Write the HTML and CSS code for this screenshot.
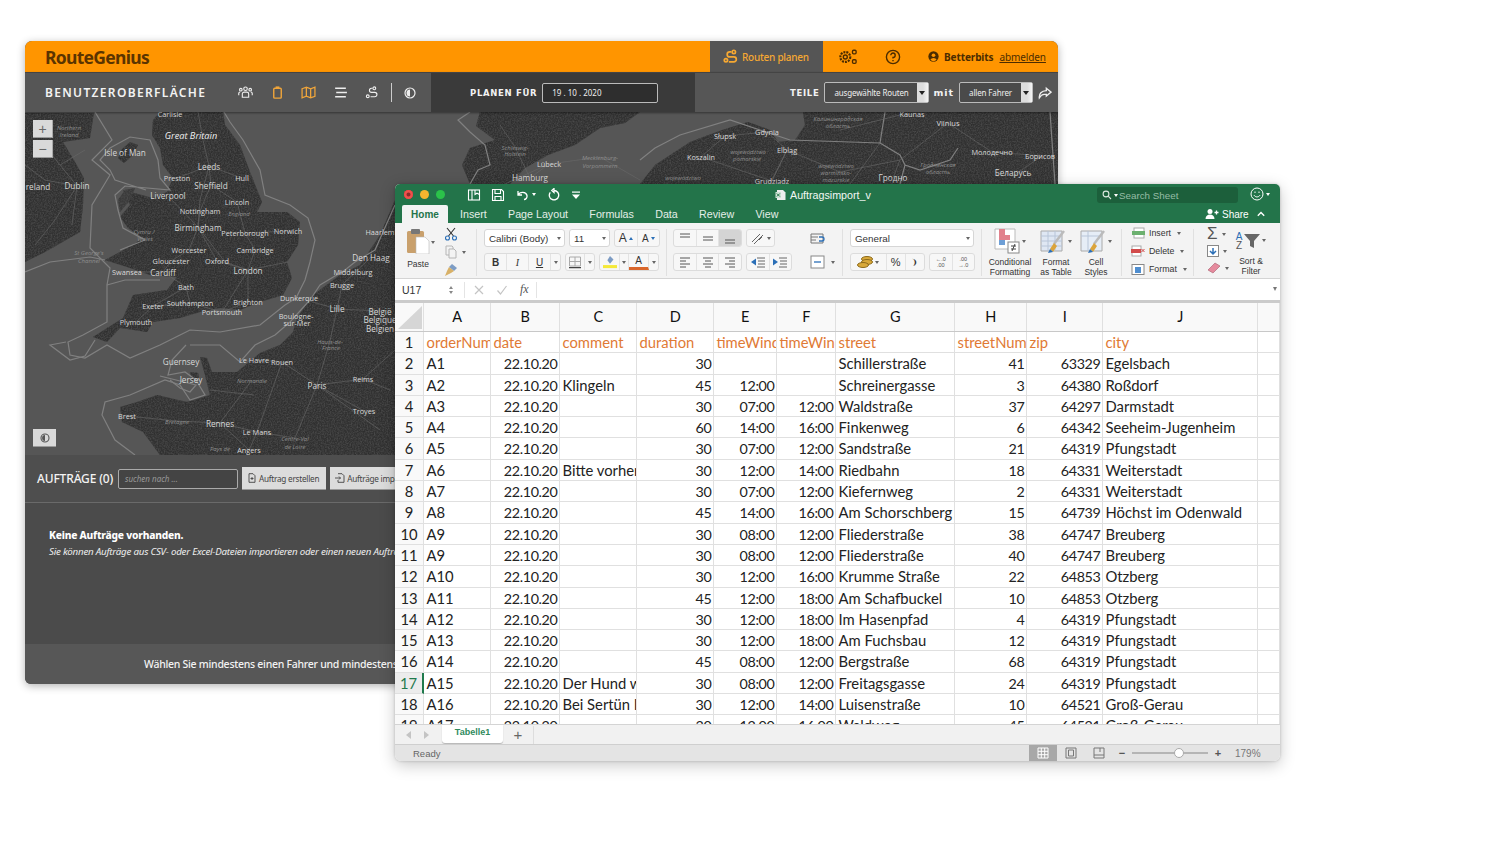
FILE: index.html
```html
<!DOCTYPE html>
<html lang="de">
<head>
<meta charset="utf-8">
<title>RouteGenius</title>
<link rel="stylesheet" href="styles.css">
</head>
<body>
<div class="desktop">

<section class="rg">
  <header class="rg-head">
    <div class="rg-logo">RouteGenius</div>
    <nav class="rg-nav">
      <div class="rg-active">
        <svg class="i15" viewBox="0 0 18 18" fill="none" stroke="currentColor" stroke-width="2"><circle cx="3.5" cy="13.5" r="2"/><circle cx="13" cy="3.5" r="2"/><path d="M10 3.5H8a3 3 0 0 0 0 6h5a2.500 2.500 0 0 1 0 6H7"/></svg>
        <span>Routen planen</span>
      </div>
      <div class="rg-gear">
        <svg class="i20" viewBox="0 0 22 20" fill="none" stroke="#4b2c00" stroke-width="1.5"><circle cx="8" cy="10" r="5.5" stroke-dasharray="2.2 1.1" stroke-width="2.4"/><circle cx="8" cy="10" r="2.2"/><rect x="16" y="2.5" width="4" height="4" rx="1.2"/><rect x="16" y="13" width="4" height="4" rx="1.2"/></svg>
      </div>
      <div class="rg-help">
        <svg class="i16" viewBox="0 0 16 16" fill="none" stroke="#4b2c00" stroke-width="1.4"><circle cx="8" cy="8" r="6.6"/><path d="M5.8 6.2A2.2 2.2 0 1 1 8 8.4V9.6"/><path d="M8 11v1.3"/></svg>
      </div>
      <div class="rg-user">
        <svg class="i11" viewBox="0 0 12 12"><circle cx="6" cy="6" r="5.6" fill="#4b2c00"/><circle cx="6" cy="4.6" r="2" fill="#ff9500"/><path d="M2.6 9.6a3.6 3 0 0 1 6.8 0 5 5 0 0 1-6.8 0z" fill="#ff9500"/></svg>
        <b>Betterbits</b><u>abmelden</u>
      </div>
    </nav>
  </header>

  <div class="rg-bar">
    <div class="rg-bar-left">
      <div class="rg-bar-title">BENUTZEROBERFLÄCHE</div>
      <div class="rg-tools">
        <svg class="i15" viewBox="0 0 16 14" fill="none" stroke="#eee" stroke-width="1.2"><circle cx="8" cy="3" r="1.9"/><circle cx="3" cy="4" r="1.4"/><circle cx="13" cy="4" r="1.4"/><path d="M4.6 12V8.6a2 2 0 0 1 2-2h2.8a2 2 0 0 1 2 2V12zM.8 10V8a1.6 1.6 0 0 1 1.6-1.6M15.2 10V8a1.6 1.6 0 0 0-1.6-1.6"/></svg>
        <svg class="i15" viewBox="0 0 16 16" fill="none" stroke="#f0a53a" stroke-width="1.5"><rect x="4" y="3.5" width="8" height="10.5" rx="1"/><rect x="6" y="1.5" width="4" height="2.6" fill="#f0a53a" stroke="none"/></svg>
        <svg class="i15" viewBox="0 0 14 14" fill="none" stroke="#f0a53a" stroke-width="1.2"><path d="M1 3.5 5 2l4 1.500L13 2v8.500L9 12l-4-1.500L1 12zM5 2v8.500M9 3.500V12"/></svg>
        <svg class="i15" viewBox="0 0 14 14" fill="none" stroke="#eee" stroke-width="1.4"><path d="M2 3h10M3 7h10M2 11h10"/></svg>
        <svg class="i15" viewBox="0 0 16 16" fill="none" stroke="#eee" stroke-width="1.2"><circle cx="4" cy="12" r="1.5"/><circle cx="11" cy="3.5" r="1.5"/><path d="M9 3.500H8a2.200 2.200 0 0 0 0 4.400h3.500a1.900 1.900 0 0 1 0 4.600H7"/></svg>
        <span class="rg-divider"></span>
        <svg class="i12" viewBox="0 0 12 12"><circle cx="6" cy="6" r="5" fill="none" stroke="#eee" stroke-width="1.2"/><path d="M6 2.500a3.500 3.500 0 0 0 0 7z" fill="#eee"/></svg>
      </div>
    </div>
    <div class="rg-plan">
      <span class="rg-label">PLANEN FÜR</span>
      <div class="rg-date">19 . 10 . 2020</div>
    </div>
    <div class="rg-share">
      <span class="rg-label">TEILE</span>
      <div class="rg-select rg-select-a"><span>ausgewählte Routen</span><i></i></div>
      <span class="rg-label rg-mit">mit</span>
      <div class="rg-select rg-select-b"><span>allen Fahrer</span><i></i></div>
      <svg class="i14 rg-share-icon" viewBox="0 0 16 14" fill="none" stroke="#eee" stroke-width="1.5"><path d="M9.500 1.500 15 6l-5.500 4.500V8.500H7C4.500 8.500 3 10 1.500 12.500 1 8 4 4.500 9.500 4.300z"/></svg>
    </div>
  </div>

  <div class="rg-map">
    <svg class="map-svg" viewBox="25 112 1033 343" preserveAspectRatio="none">
      <defs>
        <filter id="grain" x="0" y="0" width="100%" height="100%">
          <feTurbulence type="fractalNoise" baseFrequency="0.7" numOctaves="2" seed="4"/>
          <feColorMatrix type="matrix" values="0 0 0 0 0.1  0 0 0 0 0.1  0 0 0 0 0.1  1.2 0 0 0 -0.45"/>
          <feComposite in2="SourceAlpha" operator="in" result="n"/>
          <feMerge><feMergeNode in="SourceGraphic"/><feMergeNode in="n"/></feMerge>
        </filter>
      </defs>
      <g class="land" filter="url(#grain)">
        <path d="M25 113H94L90 138 63 142 75 162 84 178 83 205 80 232 45 252 25 262Z"/>
        <path d="M160 112H223L225 125 240 145 250 172 262 202 257 212 287 212 300 222 298 245 287 262 292 278 283 295 260 302 240 310 220 308 200 312 180 318 153 322 147 332 120 328 107 342 93 337 123 318 133 295 167 290 177 277 150 275 130 268 105 260 133 245 143 238 128 228 120 217 130 205 123 190 153 198 167 192 173 178 163 165 160 148 152 135 153 120Z"/>
        <path d="M125 190 135 188 130 200 120 212 118 200Z" class="land-soft"/>
        <path d="M1058 455V250L395 200 380 235 360 265 340 275 313 295 297 318 293 332 280 345 260 353 237 372 212 372 207 358 200 357 205 375 210 395 187 402 157 395 137 402 120 407 122 422 143 432 160 455Z"/>
        <path d="M122 149 130 142 138 145 133 155 124 163 118 158Z"/>
        <path d="M190 372 198 373 199 378 192 380Z"/>
        <path d="M480 112H640L625 123 600 128 575 145 548 155 525 168 510 184H470L462 165 470 148 495 140 476 126Z"/>
        <path d="M803 112H1058V184H640L655 165 690 142 722 130 748 122 770 130 778 142 795 140 805 125Z"/>
      </g>
      <g class="coast">
        <path d="M95 112 112 140 92 160 110 175 92 205 90 248 110 268 107 285 107 322 83 335 68 342 70 355 85 358 107 345 130 358 160 345 190 330 220 332 260 325 285 305 296 298 305 280 310 262 315 240 308 218 290 205 265 195 260 170 243 140 230 122 224 112"/>
        <path d="M146 190 115 180 110 170 100 160 110 148 130 137 150 140 158 160 160 178 170 190 125 186 115 195 118 210 123 228 145 240 120 250"/>
        <path d="M25 272 50 262 90 257 105 260"/>
        <path d="M107 285 125 280 160 280"/>
        <path d="M66 342 50 345 70 360 85 356 95 340"/>
        <path d="M186 345 172 360 168 375 185 372 196 380 205 395 190 400 180 385 165 380 130 395 105 402 102 415 115 440 135 455"/>
        <path d="M190 345 220 345 240 362 255 345 275 335 290 322 310 300 320 285 345 270 355 262 375 250 395 205"/>
        <path d="M160 376 196 385 190 392 180 388 170 380"/>
        <path d="M470 184 478 170 490 165 485 145 470 132 458 120 470 112"/>
        <path d="M640 160 655 148 680 135 730 120 790 140 880 143 885 112"/>
        <path d="M880 143 900 155 905 165 920 170 950 160 958 148M905 165 900 184"/>
        <path d="M1055 184 1050 112"/>
      </g>
      <g class="roads">
        <path d="M198 112 203 140 209 166 200 200 198 227 225 262 248 270M209 166 242 178M177 178 209 166 211 185 237 202 245 233 288 231M168 196 198 227 189 250 171 261 163 272M198 227 217 261 248 270 255 250 245 233M248 270 248 302 222 312 190 303 186 287 163 272M248 270 222 312M153 306 186 287M136 322 153 306 190 303M127 272 163 272M211 185 200 211 198 227M248 270 288 262"/>
        <path d="M40 140 60 165 77 186 55 220 35 245M77 186 45 180 25 165M77 186 72 225M60 165 85 150"/>
        <path d="M317 385 282 362 254 360M317 385 363 379 395 350M317 385 364 411M317 385 295 438 257 432 220 423 177 421 127 416M317 385 330 341 337 309M337 309 299 298M337 309 342 285 371 257M337 309 380 311M220 423 249 450M257 432 249 450M282 362 257 432M317 385 380 430M363 379 390 390M252 380 220 423M210 390 254 395"/>
        <path d="M500 125 515 147 530 178M549 164 600 157 640 180M530 178 549 164 505 184"/>
        <path d="M725 136 767 132 787 150 840 172 900 160 948 123M701 157 725 136M701 157 772 181 787 150M787 150 770 184M948 123 992 152 1042 156M893 178 900 160M1013 176 1042 156M840 130 900 115 912 114M880 143 850 184"/>
      </g>
      <g class="labels lb-b">
        <text x="170" y="117">Carlisle</text><text x="177" y="181">Preston</text><text x="242" y="181">Hull</text><text x="237" y="205">Lincoln</text><text x="200" y="214">Nottingham</text><text x="245" y="236">Peterborough</text><text x="288" y="234">Norwich</text><text x="189" y="253">Worcester</text><text x="255" y="253">Cambridge</text><text x="171" y="264">Gloucester</text><text x="217" y="264">Oxford</text><text x="127" y="275">Swansea</text><text x="186" y="290">Bath</text><text x="153" y="309">Exeter</text><text x="190" y="306">Southampton</text><text x="248" y="305">Brighton</text><text x="222" y="315">Portsmouth</text><text x="136" y="325">Plymouth</text><text x="380" y="235">Haarlem</text><text x="353" y="275">Middelburg</text><text x="342" y="288">Brugge</text><text x="299" y="301">Dunkerque</text><text x="296" y="319">Boulogne-</text><text x="297" y="326">sur-Mer</text><text x="254" y="363">Le Havre</text><text x="282" y="365">Rouen</text><text x="364" y="414">Troyes</text><text x="363" y="382">Reims</text><text x="127" y="419">Brest</text><text x="257" y="435">Le Mans</text><text x="249" y="453">Angers</text><text x="549" y="167">Lübeck</text><text x="725" y="139">Słupsk</text><text x="767" y="135">Gdynia</text><text x="701" y="160">Koszalin</text><text x="787" y="153">Elbląg</text><text x="912" y="117">Kaunas</text><text x="992" y="155">Молодечно</text><text x="1040" y="159">Борисов</text><text x="772" y="184">Grudziądz</text>
        <text class="lb-l" x="209" y="170">Leeds</text><text class="lb-l" x="211" y="189">Sheffield</text><text class="lb-l" x="168" y="199">Liverpool</text><text class="lb-l" x="198" y="231">Birmingham</text><text class="lb-l" x="163" y="276">Cardiff</text><text class="lb-l" x="248" y="274">London</text><text class="lb-l" x="77" y="189">Dublin</text><text class="lb-l" x="38" y="190">reland</text><text class="lb-l" x="371" y="261">Den Haag</text><text class="lb-l" x="337" y="312">Lille</text><text class="lb-l" x="380" y="315">België</text><text class="lb-l" x="380" y="323">Belgique</text><text class="lb-l" x="380" y="332">Belgien</text><text class="lb-l" x="181" y="365">Guernsey</text><text class="lb-l" x="191" y="383">Jersey</text><text class="lb-l" x="317" y="389">Paris</text><text class="lb-l" x="220" y="427">Rennes</text><text class="lb-l" x="125" y="156">Isle of Man</text><text class="lb-l" x="530" y="181">Hamburg</text><text class="lb-b2" x="948" y="126">Vilnius</text><text class="lb-l" x="1013" y="176">Беларусь</text><text class="lb-l" x="893" y="181">Гродно</text>
      </g>
      <g class="labels lb-i">
        <text class="lb-w" x="191" y="139">Great Britain</text>
        <text x="69" y="130">Northern</text><text x="69" y="137">Ireland</text><text x="239" y="216">England</text><text x="144" y="234">Cymru /</text><text x="145" y="241">Wales</text><text x="89" y="255">St George's</text><text x="89" y="263">Channel</text><text x="330" y="344">Hauts-de-</text><text x="331" y="350">France</text><text x="252" y="383">Normandie</text><text x="177" y="424">Bretagne</text><text x="295" y="441">Centre-Val</text><text x="295" y="449">de Loire</text><text x="220" y="451">Pays de</text><text x="515" y="150">Schleswig-</text><text x="515" y="156">Holstein</text><text x="600" y="160">Mecklenburg-</text><text x="600" y="168">Vorpommern</text><text x="748" y="154">województwo</text><text x="747" y="161">pomorskie</text><text x="836" y="168">województwo</text><text x="836" y="175">warmińsko-</text><text x="836" y="182">mazurskie</text><text x="838" y="121">Калининградская</text><text x="838" y="128">область</text><text x="938" y="167">Гродненская</text><text x="938" y="174">область</text><text x="683" y="180">województwo</text>
      </g>
    </svg>
    <div class="map-zoom">
      <button class="map-btn">+</button>
      <button class="map-btn">−</button>
    </div>
    <button class="map-contrast">
      <svg class="i10" viewBox="0 0 12 12"><circle cx="6" cy="6" r="4.8" fill="none" stroke="#555" stroke-width="1.3"/><path d="M6 2.500a3.500 3.500 0 0 0 0 7z" fill="#555"/></svg>
    </button>
  </div>

  <div class="rg-orders">
    <div class="rg-orders-bar">
      <div class="rg-orders-title">AUFTRÄGE (0)</div>
      <div class="rg-search">suchen nach ...</div>
      <button class="rg-btn"><svg class="i10" viewBox="0 0 10 10" fill="none" stroke="#444" stroke-width=".9"><path d="M2 .7h4l2 2v6.600H2zM5 4v3M3.500 5.500h3"/></svg>Auftrag erstellen</button>
      <button class="rg-btn"><svg class="i10" viewBox="0 0 10 10" fill="none" stroke="#444" stroke-width=".9"><path d="M3 .7h4l2 2v6.600H3V7M0 5h5.500M4 3.500 5.500 5 4 6.500"/></svg>Aufträge importieren</button>
    </div>
    <div class="rg-empty">
      <strong>Keine Aufträge vorhanden.</strong>
      <em>Sie können Aufträge aus CSV- oder Excel-Dateien importieren oder einen neuen Auftrag erstellen.</em>
    </div>
  </div>
  <footer class="rg-foot">Wählen Sie mindestens einen Fahrer und mindestens einen Auftrag aus.</footer>
</section>

<section class="xl">
  <div class="xl-title">
    <div class="xl-lights"><i class="red"></i><i class="yel"></i><i class="grn"></i></div>
    <div class="xl-quick">
      <svg class="i14" viewBox="0 0 14 14" fill="none" stroke="#fff" stroke-width="1.1"><rect x="1.5" y="2" width="11" height="10"/><path d="M5 2v10M8 2v4.500l2-1.300 2.500 1.300"/></svg>
      <svg class="i14" viewBox="0 0 14 14" fill="none" stroke="#fff" stroke-width="1.1"><path d="M1.500 1.500h9l2 2v9h-11zM4 1.500v4h5.500v-4M4 12.500V8.500h6v4"/></svg>
      <span class="xl-undo"><svg class="i14" viewBox="0 0 14 14" fill="none" stroke="#fff" stroke-width="1.3"><path d="M3 3v4h4M3 7c2-3.500 8-3.500 9 .5 .4 2-1 4-3 4"/></svg><b class="caret-w"></b></span>
      <svg class="i14" viewBox="0 0 14 14" fill="none" stroke="#fff" stroke-width="1.3"><path d="M7 2.500a4.700 4.700 0 1 1-3.700 1.800M7 .5v4L4.800 2.500z"/></svg>
      <svg class="i10" viewBox="0 0 10 10" fill="#fff"><rect x="1" y="1.5" width="8" height="1.2"/><path d="M1 4.500h8L5 9z"/></svg>
    </div>
    <div class="xl-doc">
      <svg class="i12" viewBox="0 0 12 12"><path d="M2 1h6l2.500 2.500V11H2z" fill="#eee"/><rect x="0.5" y="3" width="5.500" height="6" fill="#cfe3d6"/><path d="M1.800 4.500l3 3M4.800 4.500l-3 3" stroke="#217346"/></svg>
      <span>Auftragsimport_v</span>
    </div>
    <div class="xl-search">
      <svg class="i10" viewBox="0 0 10 10" fill="none" stroke="#dce8e0" stroke-width="1.1"><circle cx="4" cy="4" r="2.900"/><path d="M6.200 6.200 9 9"/></svg>
      <b class="caret-w"></b><span>Search Sheet</span>
    </div>
    <div class="xl-smile">
      <svg class="i14" viewBox="0 0 14 14" fill="none" stroke="#fff" stroke-width="1"><circle cx="7" cy="7" r="6"/><path d="M4 8.200c1.500 2.300 4.500 2.300 6 0"/><path d="M5 4.500v1.500M9 4.500v1.500"/></svg>
      <b class="caret-w"></b>
    </div>
  </div>
  <div class="xl-tabs">
    <span class="xl-tab xl-tab-home">Home</span>
    <span class="xl-tab xl-t-ins">Insert</span>
    <span class="xl-tab xl-t-pl">Page Layout</span>
    <span class="xl-tab xl-t-fo">Formulas</span>
    <span class="xl-tab xl-t-da">Data</span>
    <span class="xl-tab xl-t-re">Review</span>
    <span class="xl-tab xl-t-vi">View</span>
    <span class="xl-share">
      <svg class="i14" viewBox="0 0 14 12" fill="#fff"><circle cx="5" cy="3.500" r="2.500"/><path d="M0.500 11c0-3 2-4.500 4.500-4.500S9.500 8 9.500 11z"/><path d="M9.500 4.500h4M11.500 2.500v4" stroke="#fff" fill="none" stroke-width="1.3"/></svg>
      Share
      <svg class="i8 xl-up" viewBox="0 0 8 8" fill="none" stroke="#fff" stroke-width="1.4"><path d="M.8 5.800 4 2.500l3.200 3.300"/></svg>
    </span>
  </div>

  <div class="xl-ribbon">
    <div class="rb rb-paste">
      <div class="rb-pastebtn">
        <svg class="paste-svg" viewBox="0 0 24 26"><rect x="1" y="3" width="17" height="22" rx="1.500" fill="#c9a06c"/><rect x="5" y="1" width="9" height="5" rx="1" fill="#777"/><path d="M10 9h9l4 4v13H10z" fill="#fff" stroke="#bbb" stroke-width=".6"/></svg>
        <span>Paste</span>
      </div>
      <b class="caret rb-pc"></b>
      <div class="rb-clip">
        <svg class="i14" viewBox="0 0 14 14" fill="none" stroke="#333" stroke-width="1.1"><path d="M3 1l6.500 8M11 1 4.500 9"/><circle cx="3.500" cy="11" r="2" stroke="#2b6fb7"/><circle cx="10.500" cy="11" r="2" stroke="#2b6fb7"/></svg>
        <span class="rb-copy"><svg class="i14" viewBox="0 0 14 14" fill="#f3f3f3" stroke="#b5b5b5"><path d="M2 1h6l1 1v8H2z"/><path d="M5 4h5l2 2v7H5z"/></svg><b class="caret"></b></span>
        <svg class="i14" viewBox="0 0 14 14"><path d="M8 1l5 4-3 3-5-4z" fill="#7d9cc4"/><path d="M5 4 10 8 7 10 1 13l2-5z" fill="#d8b168"/></svg>
      </div>
    </div>

    <div class="rb rb-font">
      <div class="rb-row">
        <div class="rb-field rb-w81"><span>Calibri (Body)</span><b class="caret"></b></div>
        <div class="rb-field rb-w41"><span>11</span><b class="caret"></b></div>
        <div class="rb-box rb-w46"><span class="rb-cell rb-aa">A<sup class="up"></sup></span><span class="rb-cell rb-as">A<sup class="dn"></sup></span></div>
      </div>
      <div class="rb-row">
        <div class="rb-box rb-w77"><span class="rb-cell rb-b">B</span><span class="rb-cell rb-i">I</span><span class="rb-cell rb-u">U</span><span class="rb-cell rb-dd"><b class="caret"></b></span></div>
        <div class="rb-box rb-w30"><span class="rb-cell"><svg class="i14" viewBox="0 0 14 14" fill="none" stroke="#aaa"><path d="M1.500 2h11v9h-11zM7 2v9M1.500 6.500h11"/><path d="M1 12.700h12" stroke="#444" stroke-width="1.2"/></svg></span><span class="rb-dd8"><b class="caret"></b></span></div>
        <div class="rb-box rb-w60">
          <span class="rb-cell"><svg class="i14" viewBox="0 0 16 14"><path d="M8 0l4 4-4 5-3-4z" fill="#7d9cc4"/><rect y="10.500" width="16" height="3.500" fill="#f5e93a"/></svg></span><span class="rb-dd8"><b class="caret"></b></span>
          <span class="rb-cell rb-col">A</span><span class="rb-dd8"><b class="caret"></b></span>
        </div>
      </div>
    </div>

    <div class="rb rb-align">
      <div class="rb-row">
        <div class="rb-box rb-w69">
          <span class="rb-cell"><svg class="i12" viewBox="0 0 12 12" stroke="#555"><path d="M1 2h10M1 5h10"/></svg></span>
          <span class="rb-cell"><svg class="i12" viewBox="0 0 12 12" stroke="#555"><path d="M1 5h10M1 8h10"/></svg></span>
          <span class="rb-cell rb-on"><svg class="i12" viewBox="0 0 12 12" stroke="#555"><path d="M1 8h10M1 11h10"/></svg></span>
        </div>
        <div class="rb-box rb-w29"><span class="rb-cell"><svg class="i14" viewBox="0 0 14 14" fill="none" stroke="#666"><path d="M1 11 9 3M3 13l9-9M8 9l3-3"/></svg><b class="caret"></b></span></div>
      </div>
      <div class="rb-row">
        <div class="rb-box rb-w69">
          <span class="rb-cell"><svg class="i12" viewBox="0 0 12 12" stroke="#555"><path d="M1 2h10M1 5h6M1 8h10M1 11h6"/></svg></span>
          <span class="rb-cell"><svg class="i12" viewBox="0 0 12 12" stroke="#555"><path d="M1 2h10M3 5h6M1 8h10M3 11h6"/></svg></span>
          <span class="rb-cell"><svg class="i12" viewBox="0 0 12 12" stroke="#555"><path d="M1 2h10M5 5h6M1 8h10M5 11h6"/></svg></span>
        </div>
        <div class="rb-box rb-w46">
          <span class="rb-cell"><svg class="i14" viewBox="0 0 14 12"><path d="M0 6l5-3.500v7z" fill="#2b6fb7"/><path d="M6 2h8M7 5h7M7 8h7M6 11h8" stroke="#666"/></svg></span>
          <span class="rb-cell"><svg class="i14" viewBox="0 0 14 12"><path d="M5 6 0 2.500v7z" fill="#2b6fb7"/><path d="M6 2h8M7 5h7M7 8h7M6 11h8" stroke="#666"/></svg></span>
        </div>
      </div>
      <div class="rb-wrap">
        <svg class="i16" viewBox="0 0 16 14" fill="none" stroke="#777"><path d="M1 2h12v9H1zM1 5h7M1 8h5"/><path d="M9 9h3a2 2 0 0 0 0-4H9" stroke="#2b6fb7" stroke-width="1.3"/></svg>
        <span class="rb-merge"><svg class="i16" viewBox="0 0 16 14" fill="#fff" stroke="#888"><rect x="1" y="1" width="13" height="12"/><path d="M4 7h7" stroke="#2b6fb7" stroke-width="1.3"/></svg><b class="caret"></b></span>
      </div>
    </div>

    <div class="rb rb-num">
      <div class="rb-row"><div class="rb-field rb-w124"><span>General</span><b class="caret"></b></div></div>
      <div class="rb-row">
        <div class="rb-box rb-w75">
          <span class="rb-cell rb-coins"><svg class="i16" viewBox="0 0 16 14"><ellipse cx="10" cy="4" rx="5.500" ry="2.500" fill="#d9a93a" stroke="#8d6b1c"/><ellipse cx="10" cy="7" rx="5.500" ry="2.500" fill="#d9a93a" stroke="#8d6b1c"/><ellipse cx="6" cy="10" rx="5.500" ry="2.500" fill="#d9a93a" stroke="#8d6b1c"/></svg><b class="caret"></b></span>
          <span class="rb-cell rb-pct">%</span>
          <span class="rb-cell rb-comma">❩</span>
        </div>
        <div class="rb-box rb-w46">
          <span class="rb-cell rb-dec"><i>←.0</i><i>.00</i></span>
          <span class="rb-cell rb-dec"><i>.00</i><i>→.0</i></span>
        </div>
      </div>
    </div>

    <div class="rb rb-styles">
      <div class="rb-big rb-w1">
        <span class="rb-bigicon"><svg class="big" viewBox="0 0 26 26"><path d="M1 1h20v20H1z" fill="#fff" stroke="#bbb"/><path d="M5 1h6v6H5z" fill="#e1818c"/><path d="M5 7h11v5H5z" fill="#e1818c"/><path d="M5 12h6v5H5z" fill="#6e9fd6"/><rect x="14" y="14" width="11" height="11" fill="#fff" stroke="#888"/><path d="M17 18h5M17 21h5M21 16l-3 7" stroke="#444"/></svg><b class="caret"></b></span>
        <span>Conditional<br>Formatting</span>
      </div>
      <div class="rb-big rb-w2">
        <span class="rb-bigicon"><svg class="big" viewBox="0 0 26 26"><path d="M1 3h21v20H1z" fill="#dfe7f3" stroke="#aaa"/><path d="M1 8h21M1 13h21M1 18h21M8 3v20M15 3v20" stroke="#b8c5d8"/><path d="M24 3 14 16" stroke="#bbb" stroke-width="2.500"/><path d="M14 15l-4 6 3 3 4-6z" fill="#dba43c"/><path d="M10 21l-2 4 5-1z" fill="#2b6fb7"/></svg><b class="caret"></b></span>
        <span>Format<br>as Table</span>
      </div>
      <div class="rb-big rb-w3">
        <span class="rb-bigicon"><svg class="big" viewBox="0 0 26 26"><path d="M1 3h21v20H1z" fill="#e6edf6" stroke="#aaa"/><path d="M1 8h21M8 3v20" stroke="#b8c5d8"/><path d="M24 3 14 16" stroke="#bbb" stroke-width="2.500"/><path d="M14 15l-4 6 3 3 4-6z" fill="#dba43c"/><path d="M10 21l-2 4 5-1z" fill="#2b6fb7"/></svg><b class="caret"></b></span>
        <span>Cell<br>Styles</span>
      </div>
    </div>

    <div class="rb rb-cells">
      <div class="rb-line"><svg class="i14" viewBox="0 0 14 12"><rect x="3" y="1" width="10" height="10" fill="#fff" stroke="#aaa"/><rect x="1" y="4" width="13" height="4" fill="#6cb06f"/></svg><span>Insert</span><b class="caret"></b></div>
      <div class="rb-line"><svg class="i14" viewBox="0 0 14 12"><rect x="1" y="1" width="9" height="10" fill="#fff" stroke="#aaa"/><rect x="0" y="4" width="10" height="4" fill="#d24b4b"/><path d="M10.500 4l3 3M13.500 4l-3 3" stroke="#d24b4b"/></svg><span>Delete</span><b class="caret"></b></div>
      <div class="rb-line"><svg class="i14" viewBox="0 0 14 12"><rect x="1" y="1.500" width="12" height="10" fill="#fff" stroke="#888"/><rect x="4" y="4" width="6" height="6" fill="#4f8ed0"/></svg><span>Format</span><b class="caret"></b></div>
    </div>

    <div class="rb rb-edit">
      <div class="rb-edit-col">
        <span class="rb-sigma">Σ<b class="caret"></b></span>
        <span class="rb-ic"><svg class="i12" viewBox="0 0 12 12"><rect x=".5" y=".5" width="11" height="11" fill="#fff" stroke="#888"/><path d="M6 3v6M3 6l3 3 3-3" fill="none" stroke="#2b6fb7" stroke-width="1.5"/></svg><b class="caret"></b></span>
        <span class="rb-ic"><svg class="i14" viewBox="0 0 14 12"><path d="M1 8 8 1l5 3-7 7z" fill="#e58a9d" stroke="#a85c6d" stroke-width=".6"/></svg><b class="caret"></b></span>
      </div>
      <div class="rb-big rb-w4">
        <span class="rb-bigicon"><span class="rb-az"><i>A</i><i>Z</i></span><svg class="i16" viewBox="0 0 16 16"><path d="M0 1h16L10 8v7l-4-2V8z" fill="#666"/></svg><b class="caret"></b></span>
        <span>Sort &amp;<br>Filter</span>
      </div>
    </div>
  </div>

  <div class="xl-formula">
    <span class="xl-name">U17</span>
    <span class="xl-step"><i class="s-up"></i><i class="s-dn"></i></span>
    <span class="xl-fbtns">
      <svg class="i10" viewBox="0 0 10 10" stroke="#c4c4c4" stroke-width="1.2"><path d="M1 1l8 8M9 1 1 9"/></svg>
      <svg class="i10" viewBox="0 0 10 10" fill="none" stroke="#c4c4c4" stroke-width="1.2"><path d="M.5 5.500 3.500 9 9.500 1"/></svg>
      <span class="xl-fx">fx</span>
    </span>
    <span class="xl-fdown"></span>
  </div>

  <div class="xl-sheet">
    <div class="xr xr-head"><div class="xc xh xh-corner"><i></i></div><div class="xc xh">A</div><div class="xc xh">B</div><div class="xc xh">C</div><div class="xc xh">D</div><div class="xc xh">E</div><div class="xc xh">F</div><div class="xc xh">G</div><div class="xc xh">H</div><div class="xc xh">I</div><div class="xc xh">J</div><div class="xc xh"></div></div>
    <div class="xr xr-orange"><div class="xc xn">1</div><div class="xc">orderNumber</div><div class="xc">date</div><div class="xc">comment</div><div class="xc">duration</div><div class="xc">timeWindowStart</div><div class="xc">timeWindowEnd</div><div class="xc">street</div><div class="xc">streetNumber</div><div class="xc">zip</div><div class="xc">city</div><div class="xc"></div></div>
    <div class="xr"><div class="xc xn">2</div><div class="xc">A1</div><div class="xc r">22.10.20</div><div class="xc"></div><div class="xc r">30</div><div class="xc r"></div><div class="xc r"></div><div class="xc">Schillerstraße</div><div class="xc r">41</div><div class="xc r">63329</div><div class="xc">Egelsbach</div><div class="xc"></div></div>
    <div class="xr"><div class="xc xn">3</div><div class="xc">A2</div><div class="xc r">22.10.20</div><div class="xc">Klingeln</div><div class="xc r">45</div><div class="xc r">12:00</div><div class="xc r"></div><div class="xc">Schreinergasse</div><div class="xc r">3</div><div class="xc r">64380</div><div class="xc">Roßdorf</div><div class="xc"></div></div>
    <div class="xr"><div class="xc xn">4</div><div class="xc">A3</div><div class="xc r">22.10.20</div><div class="xc"></div><div class="xc r">30</div><div class="xc r">07:00</div><div class="xc r">12:00</div><div class="xc">Waldstraße</div><div class="xc r">37</div><div class="xc r">64297</div><div class="xc">Darmstadt</div><div class="xc"></div></div>
    <div class="xr"><div class="xc xn">5</div><div class="xc">A4</div><div class="xc r">22.10.20</div><div class="xc"></div><div class="xc r">60</div><div class="xc r">14:00</div><div class="xc r">16:00</div><div class="xc">Finkenweg</div><div class="xc r">6</div><div class="xc r">64342</div><div class="xc">Seeheim-Jugenheim</div><div class="xc"></div></div>
    <div class="xr"><div class="xc xn">6</div><div class="xc">A5</div><div class="xc r">22.10.20</div><div class="xc"></div><div class="xc r">30</div><div class="xc r">07:00</div><div class="xc r">12:00</div><div class="xc">Sandstraße</div><div class="xc r">21</div><div class="xc r">64319</div><div class="xc">Pfungstadt</div><div class="xc"></div></div>
    <div class="xr"><div class="xc xn">7</div><div class="xc">A6</div><div class="xc r">22.10.20</div><div class="xc">Bitte vorher anrufen</div><div class="xc r">30</div><div class="xc r">12:00</div><div class="xc r">14:00</div><div class="xc">Riedbahn</div><div class="xc r">18</div><div class="xc r">64331</div><div class="xc">Weiterstadt</div><div class="xc"></div></div>
    <div class="xr"><div class="xc xn">8</div><div class="xc">A7</div><div class="xc r">22.10.20</div><div class="xc"></div><div class="xc r">30</div><div class="xc r">07:00</div><div class="xc r">12:00</div><div class="xc">Kiefernweg</div><div class="xc r">2</div><div class="xc r">64331</div><div class="xc">Weiterstadt</div><div class="xc"></div></div>
    <div class="xr"><div class="xc xn">9</div><div class="xc">A8</div><div class="xc r">22.10.20</div><div class="xc"></div><div class="xc r">45</div><div class="xc r">14:00</div><div class="xc r">16:00</div><div class="xc">Am Schorschberg</div><div class="xc r">15</div><div class="xc r">64739</div><div class="xc">Höchst im Odenwald</div><div class="xc"></div></div>
    <div class="xr"><div class="xc xn">10</div><div class="xc">A9</div><div class="xc r">22.10.20</div><div class="xc"></div><div class="xc r">30</div><div class="xc r">08:00</div><div class="xc r">12:00</div><div class="xc">Fliederstraße</div><div class="xc r">38</div><div class="xc r">64747</div><div class="xc">Breuberg</div><div class="xc"></div></div>
    <div class="xr"><div class="xc xn">11</div><div class="xc">A9</div><div class="xc r">22.10.20</div><div class="xc"></div><div class="xc r">30</div><div class="xc r">08:00</div><div class="xc r">12:00</div><div class="xc">Fliederstraße</div><div class="xc r">40</div><div class="xc r">64747</div><div class="xc">Breuberg</div><div class="xc"></div></div>
    <div class="xr"><div class="xc xn">12</div><div class="xc">A10</div><div class="xc r">22.10.20</div><div class="xc"></div><div class="xc r">30</div><div class="xc r">12:00</div><div class="xc r">16:00</div><div class="xc">Krumme Straße</div><div class="xc r">22</div><div class="xc r">64853</div><div class="xc">Otzberg</div><div class="xc"></div></div>
    <div class="xr"><div class="xc xn">13</div><div class="xc">A11</div><div class="xc r">22.10.20</div><div class="xc"></div><div class="xc r">45</div><div class="xc r">12:00</div><div class="xc r">18:00</div><div class="xc">Am Schafbuckel</div><div class="xc r">10</div><div class="xc r">64853</div><div class="xc">Otzberg</div><div class="xc"></div></div>
    <div class="xr"><div class="xc xn">14</div><div class="xc">A12</div><div class="xc r">22.10.20</div><div class="xc"></div><div class="xc r">30</div><div class="xc r">12:00</div><div class="xc r">18:00</div><div class="xc">Im Hasenpfad</div><div class="xc r">4</div><div class="xc r">64319</div><div class="xc">Pfungstadt</div><div class="xc"></div></div>
    <div class="xr"><div class="xc xn">15</div><div class="xc">A13</div><div class="xc r">22.10.20</div><div class="xc"></div><div class="xc r">30</div><div class="xc r">12:00</div><div class="xc r">18:00</div><div class="xc">Am Fuchsbau</div><div class="xc r">12</div><div class="xc r">64319</div><div class="xc">Pfungstadt</div><div class="xc"></div></div>
    <div class="xr"><div class="xc xn">16</div><div class="xc">A14</div><div class="xc r">22.10.20</div><div class="xc"></div><div class="xc r">45</div><div class="xc r">08:00</div><div class="xc r">12:00</div><div class="xc">Bergstraße</div><div class="xc r">68</div><div class="xc r">64319</div><div class="xc">Pfungstadt</div><div class="xc"></div></div>
    <div class="xr"><div class="xc xn xn-sel">17</div><div class="xc">A15</div><div class="xc r">22.10.20</div><div class="xc">Der Hund wartet im Hof</div><div class="xc r">30</div><div class="xc r">08:00</div><div class="xc r">12:00</div><div class="xc">Freitagsgasse</div><div class="xc r">24</div><div class="xc r">64319</div><div class="xc">Pfungstadt</div><div class="xc"></div></div>
    <div class="xr"><div class="xc xn">18</div><div class="xc">A16</div><div class="xc r">22.10.20</div><div class="xc">Bei Sertün läuten</div><div class="xc r">30</div><div class="xc r">12:00</div><div class="xc r">14:00</div><div class="xc">Luisenstraße</div><div class="xc r">10</div><div class="xc r">64521</div><div class="xc">Groß-Gerau</div><div class="xc"></div></div>
    <div class="xr"><div class="xc xn">19</div><div class="xc">A17</div><div class="xc r">22.10.20</div><div class="xc"></div><div class="xc r">30</div><div class="xc r">12:00</div><div class="xc r">16:00</div><div class="xc">Waldweg</div><div class="xc r">45</div><div class="xc r">64521</div><div class="xc">Groß-Gerau</div><div class="xc"></div></div>
  </div>

  <div class="xl-sheets">
    <span class="xl-nav"><i class="nav-l"></i><i class="nav-r"></i></span>
    <span class="xl-sheettab">Tabelle1</span>
    <span class="xl-plus">+</span>
  </div>
  <div class="xl-status">
    <span class="xl-ready">Ready</span>
    <div class="xl-views">
      <span class="xl-view xl-view-on"><svg class="i12" viewBox="0 0 12 12" fill="none" stroke="#fff"><path d="M1 1h10v10H1zM1 4.300h10M1 7.700h10M4.300 1v10M7.700 1v10"/></svg></span>
      <span class="xl-view"><svg class="i12" viewBox="0 0 12 12" fill="none" stroke="#777"><path d="M1 1h10v10H1zM3.500 3h5v6h-5z"/></svg></span>
      <span class="xl-view"><svg class="i12" viewBox="0 0 12 12" fill="none" stroke="#777"><path d="M1 1h10v10H1zM1 8h10M7 1v4"/></svg></span>
    </div>
    <div class="xl-zoom">
      <span class="xl-zsign">−</span>
      <span class="xl-track"><i></i></span>
      <span class="xl-zsign">+</span>
      <span class="xl-pct">179%</span>
    </div>
  </div>
</section>
</div>
</body>
</html>
```

FILE: styles.css
```css
* { box-sizing: border-box; }
html, body { margin: 0; padding: 0; background: #fff; }
body { width: 1499px; height: 843px; overflow: hidden; }
.desktop { position: relative; width: 1499px; height: 843px; }
svg { display: block; flex: none; }
button { font: inherit; padding: 0; }
.i8 { width: 8px; height: 8px; }
.i10 { width: 10px; height: 10px; }
.i11 { width: 11px; height: 11px; }
.i12 { width: 12px; height: 12px; }
.i14 { width: 14px; height: 14px; }
.i15 { width: 15px; height: 15px; }
.i16 { width: 16px; height: 16px; }
.i20 { width: 20px; height: 18px; }

/* RouteGenius window */
.rg {
  position: absolute; left: 25px; top: 41px; width: 1033px; height: 643px;
  display: flex; flex-direction: column; overflow: hidden;
  border-radius: 7px 7px 6px 6px; background: #4b4b4b;
  box-shadow: 0 2px 8px rgba(0,0,0,.3);
  font-family: "Noto Sans", sans-serif; color: #fff;
}
.rg-head { height: 31px; background: #ff9500; display: flex; justify-content: space-between; flex: none; }
.rg-logo { margin-left: 20px; font-size: 17.5px; font-weight: 700; line-height: 32px; color: #5a3400; letter-spacing: -.7px; }
.rg-nav { display: flex; align-items: stretch; width: 348px; }
.rg-active { width: 113px; background: #555; color: #f6a832; display: flex; align-items: center; gap: 4px; padding-left: 13px; font-size: 10px; font-weight: 500; letter-spacing: -.25px; white-space: nowrap; }
.rg-gear { width: 50px; display: flex; align-items: center; justify-content: center; }
.rg-help { width: 40px; display: flex; align-items: center; justify-content: center; }
.rg-user { display: flex; align-items: center; margin-left: 15px; gap: 5px; font-size: 10px; color: #4b2c00; letter-spacing: -.1px; white-space: nowrap; }
.rg-user u { font-weight: 400; margin-left: 1px; }

.rg-bar { height: 40px; flex: none; display: flex; background: #565656; border-top: 1px solid #444; box-shadow: 0 1px 2px rgba(0,0,0,.4); position: relative; z-index: 2; }
.rg-bar-left { width: 406px; display: flex; align-items: center; padding-left: 20px; }
.rg-bar-title { font-size: 12px; font-weight: 600; letter-spacing: 1.33px; width: 193px; color: #f2f2f2; white-space: nowrap; }
.rg-tools { display: flex; align-items: center; gap: 16.5px; }
.rg-divider { width: 1px; height: 19px; background: #ccc; margin: 0 -4px 0 -5px; }
.rg-plan { width: 264px; background: #3a3a3a; display: flex; align-items: center; padding-left: 39px; gap: 5px; }
.rg-label { font-family: "DejaVu Sans", sans-serif; font-size: 8.5px; font-weight: 700; letter-spacing: .68px; color: #f2f2f2; white-space: nowrap; }
.rg-date { width: 116px; height: 20px; border: 1px solid #bbb; border-radius: 2px; background: #2e2e2e; font-size: 8px; line-height: 18px; padding-left: 9px; color: #eee; }
.rg-share { flex: 1; display: flex; align-items: center; padding-left: 95px; background: #565656; }
.rg-select { height: 21px; border: 1px solid #bbb; border-radius: 2px; background: #4a4a4a; display: flex; align-items: center; justify-content: space-between; font-size: 8px; color: #eee; letter-spacing: -.15px; white-space: nowrap; }
.rg-select span { padding-left: 9px; }
.rg-select i { width: 11px; height: 19px; background: linear-gradient(90deg, #ddd, #ddd 55%, #f4f4f4); position: relative; }
.rg-select i::after { content: ""; position: absolute; left: 2px; top: 8px; border: 3px solid transparent; border-top: 4px solid #222; border-bottom: 0; }
.rg-select-a { width: 105px; margin-left: 5px; }
.rg-select-b { width: 74px; }
.rg-mit { margin: 0 5px 0 4px; font-size: 9.5px; letter-spacing: 1px; }
.rg-share-icon { margin-left: 5px; }

.rg-map { height: 343px; flex: none; position: relative; background: #565656; overflow: hidden; font-family: "Open Sans", sans-serif; }
.map-svg { width: 1033px; height: 343px; }
.land path { fill: #333; }
.land .land-soft { fill: #3a3a3a; }
.coast path { fill: none; stroke: #808080; stroke-width: 1.2; }
.roads path { fill: none; stroke: #6a6a6a; stroke-width: .6; }
.labels text { font-family: "Open Sans", sans-serif; text-anchor: middle; }
.lb-b text { font-size: 7.3px; fill: #dadada; }
.lb-b .lb-l { font-size: 8.2px; fill: #d8d8d8; }
.lb-b .lb-b2 { font-size: 7.6px; }
.lb-i text { font-size: 6px; fill: #8f8f8f; font-style: italic; }
.lb-i .lb-w { font-size: 9.2px; fill: #f0f0f0; }
.map-zoom { position: absolute; left: 8px; top: 8px; display: flex; flex-direction: column; gap: 2px; }
.map-btn { width: 20px; height: 18px; border: 0; border-bottom: 1px solid #999; border-right: 1px solid #aaa; background: #d9d9d9; color: #666; font-size: 14px; line-height: 16px; font-family: "Liberation Sans", sans-serif; }
.map-contrast { position: absolute; left: 8px; top: 317px; width: 23px; height: 18px; border: 0; border-bottom: 1px solid #999; background: #d9d9d9; display: flex; align-items: center; justify-content: center; }

.rg-orders { flex: 1; display: flex; flex-direction: column; background: #4b4b4b; }
.rg-orders-bar { height: 48px; border-bottom: 1px solid #6a6a6a; display: flex; align-items: center; padding-left: 12px; flex: none; background: #4e4e4e; }
.rg-orders-title { font-size: 12px; font-weight: 500; letter-spacing: -.15px; width: 81px; white-space: nowrap; color: #f3f3f3; }
.rg-search { width: 120px; height: 20px; border: 1px solid #aaa; border-radius: 2px; background: #444; color: #999; font-size: 8px; font-style: italic; line-height: 18px; padding-left: 6px; }
.rg-btn { height: 23px; margin-left: 4px; border: 0; border-bottom: 1px solid #999; background: #dcdcdc; color: #444; font-size: 8.2px; letter-spacing: -.25px; display: flex; align-items: center; gap: 2px; padding: 0 7px 0 5px; white-space: nowrap; font-family: "Noto Sans", sans-serif; }
.rg-empty { padding: 25px 0 0 24px; display: flex; flex-direction: column; gap: 3px; white-space: nowrap; }
.rg-empty strong { font-size: 10.2px; line-height: 14px; letter-spacing: -.2px; font-weight: 800; }
.rg-empty em { font-size: 9.75px; line-height: 13px; letter-spacing: -.23px; color: #eee; }
.rg-foot { height: 40px; flex: none; background: #575757; padding-left: 119px; line-height: 41px; font-size: 10.5px; font-weight: 500; letter-spacing: -.27px; white-space: nowrap; color: #f3f3f3; }

/* Excel window */
.xl {
  position: absolute; left: 395px; top: 184px; width: 885px; height: 577px;
  display: flex; flex-direction: column; overflow: hidden;
  border-radius: 5px 5px 6px 6px; background: #fff;
  box-shadow: 0 4px 16px rgba(0,0,0,.22), 0 0 3px rgba(0,0,0,.2);
  font-family: "Liberation Sans", sans-serif; color: #333;
}
.xl-title { height: 21px; background: #23744a; display: flex; align-items: center; position: relative; flex: none; color: #fff; }
.xl-lights { display: flex; gap: 7px; margin-left: 9px; }
.xl-lights i { width: 9px; height: 9px; border-radius: 50%; }
.red { background: #f0504c; box-shadow: inset 0 0 0 2.5px #f0504c, inset 0 0 0 5px #8a2c2a; }
.yel { background: #f5b52e; }
.grn { background: #2bc24a; }
.xl-quick { display: flex; align-items: center; gap: 10px; margin-left: 22px; }
.xl-undo { display: flex; align-items: center; gap: 3px; margin-right: 1px; }
.caret-w { width: 0; height: 0; border: 2.5px solid transparent; border-top: 3px solid #fff; border-bottom: 0; display: block; }
.xl-doc { display: flex; align-items: center; gap: 3px; margin-left: 194px; margin-top: 1px; font-size: 10.7px; color: #f2f7f4; }
.xl-search { position: absolute; left: 702px; top: 3px; width: 141px; height: 16px; border-radius: 3px; background: #1c5f3b; display: flex; align-items: center; gap: 2px; padding-left: 5px; font-size: 9.8px; color: #96bda6; }
.xl-search span { margin-left: -1px; }
.xl-smile { position: absolute; left: 855px; top: 3px; display: flex; align-items: center; gap: 2px; }
.xl-tabs { height: 18px; background: #23744a; display: flex; align-items: stretch; flex: none; font-size: 10.7px; color: #e3eee8; position: relative; }
.xl-tab { display: flex; align-items: center; white-space: nowrap; }
.xl-tab-home { width: 46px; margin-left: 7px; background: #f3f3f3; color: #23744a; justify-content: center; font-weight: 700; font-size: 10px; border-radius: 2px 2px 0 0; }
.xl-t-ins { margin-left: 12px; }
.xl-t-pl, .xl-t-fo, .xl-t-da, .xl-t-re, .xl-t-vi { margin-left: 21.3px; }
.xl-share { position: absolute; left: 810px; top: 0; height: 18px; display: flex; align-items: center; gap: 3px; color: #fff; font-size: 10px; }
.xl-up { margin-left: 5px; }

.xl-ribbon { height: 56px; flex: none; background: #f3f3f3; display: flex; border-bottom: 1px solid #d4d4d4; padding: 6px 0 2px; font-size: 9px; }
.rb { display: flex; flex-direction: column; gap: 6px; border-right: 1px solid #e0e0e0; position: relative; flex: none; }
.rb-row { display: flex; gap: 4px; height: 18px; }
.caret { width: 0; height: 0; border: 2px solid transparent; border-top: 3px solid #666; border-bottom: 0; display: block; flex: none; }
.rb-paste { width: 82px; flex-direction: row; gap: 0; padding-left: 9px; }
.rb-pastebtn { width: 28px; margin-top: -1px; display: flex; flex-direction: column; align-items: center; gap: 5px; font-size: 8.5px; }
.paste-svg { width: 24px; height: 26px; }
.rb-pc { margin: 12px 0 0 -1px; }
.rb-clip { display: flex; flex-direction: column; gap: 4px; margin: -2px 0 0 9px; }
.rb-copy { display: flex; align-items: center; gap: 4px; }
.rb-font { width: 190px; padding-left: 7px; }
.rb-align { width: 176px; padding-left: 6px; }
.rb-num { width: 139px; padding-left: 7px; }
.rb-field { height: 18px; background: #fff; border: 1px solid #d6d6d6; border-radius: 3px; display: flex; align-items: center; justify-content: space-between; padding: 0 3px 0 4px; font-size: 9.8px; color: #333; white-space: nowrap; }
.rb-box { height: 18px; background: #f7f7f7; border: 1px solid #dcdcdc; border-radius: 3px; display: flex; align-items: stretch; overflow: hidden; }
.rb-cell { flex: 1; display: flex; align-items: center; justify-content: center; gap: 2px; border-right: 1px solid #e3e3e3; }
.rb-cell:last-child { border-right: 0; }
.rb-on { background: #d4d4d4; }
.rb-dd, .rb-dd8 { flex: none; width: 9px; display: flex; align-items: center; justify-content: center; border-right: 1px solid #e3e3e3; }
.rb-dd8:last-child, .rb-dd:last-child { border-right: 0; }
.rb-w81 { width: 81px; }
.rb-w41 { width: 41px; }
.rb-w46 { width: 46px; }
.rb-w77 { width: 77px; }
.rb-w30 { width: 30px; }
.rb-w60 { width: 60px; }
.rb-w69 { width: 69px; }
.rb-w29 { width: 29px; }
.rb-w124 { width: 124px; }
.rb-w75 { width: 75px; }
.rb-aa { font-size: 12px; }
.rb-as { font-size: 10px; }
.up, .dn { width: 0; height: 0; border: 2.5px solid transparent; display: block; }
.up { border-bottom: 3px solid #2b6fb7; border-top: 0; }
.dn { border-top: 3px solid #2b6fb7; border-bottom: 0; }
.rb-b { font-weight: 700; font-size: 10px; }
.rb-i { font-style: italic; font-size: 10px; font-family: "Liberation Serif", serif; }
.rb-u { text-decoration: underline; font-size: 10px; }
.rb-col { font-size: 10px; border-bottom: 3px solid #d9662c; }
.rb-wrap { position: absolute; left: 143px; top: 2px; display: flex; flex-direction: column; gap: 7px; }
.rb-merge { display: flex; align-items: center; gap: 5px; }
.rb-coins { flex: 1.9; }
.rb-pct { font-size: 11px; }
.rb-comma { font-size: 8px; }
.rb-dec { flex-direction: column; gap: 0; font-size: 5.5px; line-height: 6px; color: #555; }
.rb-dec i { font-style: normal; }
.rb-styles { width: 140px; flex-direction: row; gap: 0; }
.rb-big { display: flex; flex-direction: column; align-items: center; gap: 3px; margin-top: -1px; font-size: 8.5px; line-height: 10px; text-align: center; white-space: nowrap; }
.rb-bigicon { display: flex; align-items: center; gap: 2px; height: 26px; }
.big { width: 26px; height: 26px; }
.rb-w1 { width: 56px; }
.rb-w2 { width: 36px; }
.rb-w3 { width: 44px; }
.rb-w4 { width: 42px; margin-left: -1px; }
.rb-cells { width: 71px; gap: 4px; padding-left: 9px; margin-top: -3px; border-right: 0; }
.rb-line { height: 14px; display: flex; align-items: center; gap: 4px; font-size: 8.8px; }
.rb-line .caret { margin-left: 2px; }
.rb-edit { width: 87px; flex-direction: row; gap: 0; padding-left: 13px; border-right: 0; border-left: 1px solid #e0e0e0; }
.rb-edit-col { display: flex; flex-direction: column; gap: 3px; width: 24px; margin-top: -2px; }
.rb-sigma { font-size: 17px; line-height: 14px; display: flex; align-items: center; gap: 4px; color: #555; }
.rb-ic { display: flex; align-items: center; gap: 4px; height: 14px; }
.rb-az { display: flex; flex-direction: column; font-size: 10px; line-height: 9px; }
.rb-az i { font-style: normal; color: #555; }
.rb-az i:first-child { color: #2b6fb7; }

.xl-formula { height: 24px; flex: none; background: #fff; display: flex; align-items: center; position: relative; border-bottom: 3px solid #cbcbcb; }
.xl-name { margin-left: 7px; width: 47px; font-size: 10.5px; }
.xl-step { display: flex; flex-direction: column; gap: 2px; width: 10px; }
.s-up, .s-dn { width: 0; height: 0; border: 2.5px solid transparent; display: block; }
.s-up { border-bottom: 3px solid #888; border-top: 0; }
.s-dn { border-top: 3px solid #888; border-bottom: 0; }
.xl-fbtns { display: flex; align-items: center; gap: 13px; margin-left: 5px; padding-left: 9px; border-left: 1px solid #e4e4e4; height: 16px; }
.xl-fx { font-family: "Liberation Serif", serif; font-style: italic; font-size: 12px; color: #555; padding-right: 7px; border-right: 1px solid #e4e4e4; height: 16px; line-height: 15px; }
.xl-fdown { position: absolute; right: 3px; top: 8px; border: 2.5px solid transparent; border-top: 4px solid #777; border-bottom: 0; }

.xl-sheet { flex: 1; min-height: 0; overflow: hidden; background: #fff; font-family: Lato, sans-serif; font-size: 14.8px; color: #222; }
.xr { display: grid; grid-template-columns: 29px 67px 69px 77px 77px 63px 59px 119px 72px 76px 155px 22px; height: 21.3px; }
.xr-head { height: 29px; background: #f9f9f9; border-bottom: 1px solid #c8c8c8; }
.xc { border-right: 1px solid #e0e0e0; border-bottom: 1px solid #e0e0e0; padding: 0 2px 0 2.5px; overflow: hidden; white-space: nowrap; line-height: 21px; }
.r { text-align: right; letter-spacing: -.35px; font-size: 14.3px; padding-right: 1.5px; }
.xh { text-align: center; line-height: 28px; background: #f9f9f9; border-bottom: 0; font-size: 14.5px; color: #111; }
.xh-corner { position: relative; }
.xh-corner i { position: absolute; left: 3px; top: 3px; width: 0; height: 0; border-style: solid; border-width: 0 0 23px 24px; border-color: transparent transparent #d6d6d6 transparent; }
.xn { text-align: center; background: #f9f9f9; padding: 0; }
.xn-sel { background: #ececec; color: #1f7a4c; border-right: 2px solid #1f7a4c; }
.xr-orange .xc:not(.xn) { color: #df7a35; }

.xl-sheets { height: 20px; flex: none; background: #f1f1f1; border-top: 1px solid #d4d4d4; display: flex; align-items: center; }
.xl-nav { display: flex; gap: 13px; margin-left: 11px; width: 36px; }
.nav-l, .nav-r { width: 0; height: 0; border: 4px solid transparent; display: block; }
.nav-l { border-right: 5px solid #c4c4c4; border-left: 0; }
.nav-r { border-left: 5px solid #c4c4c4; border-right: 0; }
.xl-sheettab { width: 61px; height: 18px; margin-top: -2px; background: #fff; color: #2f8a5c; font-size: 9px; font-weight: 700; text-align: center; line-height: 15px; border-radius: 0 0 3px 3px; box-shadow: 0 1px 1px rgba(0,0,0,.25); }
.xl-plus { width: 31px; height: 18px; text-align: center; font-size: 15px; line-height: 17px; color: #666; border-right: 1px solid #ddd; }
.xl-status { height: 17px; flex: none; background: #e4e4e4; border-top: 1px solid #cfcfcf; display: flex; align-items: center; font-size: 9.5px; color: #666; }
.xl-ready { margin-left: 18px; width: 616px; }
.xl-views { display: flex; }
.xl-view { width: 28px; height: 16px; display: flex; align-items: center; justify-content: center; }
.xl-view-on { background: #a8a8a8; }
.xl-zoom { display: flex; align-items: center; margin-left: 5px; }
.xl-zsign { font-size: 11px; width: 8px; text-align: center; font-weight: 700; color: #555; }
.xl-track { width: 76px; height: 2px; background: #b5b5b5; margin: 0 6px; position: relative; }
.xl-track i { position: absolute; left: 42px; top: -4px; width: 10px; height: 10px; border-radius: 50%; background: #fff; border: 1px solid #aaa; }
.xl-pct { margin-left: 13px; font-size: 10px; color: #777; }
```
